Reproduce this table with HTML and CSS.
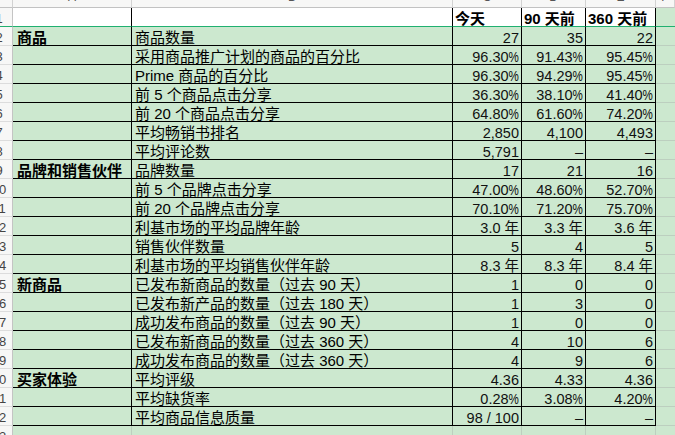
FILE: index.html
```html
<!DOCTYPE html>
<html lang="zh-CN">
<head>
<meta charset="utf-8">
<title>Sheet</title>
<link rel="stylesheet" href="styles.css">
</head>
<body>
<div class="sheet">
  <div class="row">
    <div class="hd corner"></div>
    <div class="hd"><span class="letter">A</span></div>
    <div class="hd"><span class="letter">B</span></div>
    <div class="hd"><span class="letter">C</span></div>
    <div class="hd"><span class="letter">D</span></div>
    <div class="hd"><span class="letter">E</span></div>
    <div class="hd"><span class="letter">F</span></div>
  </div>
  <div class="row top">
    <div class="rn"><span>1</span></div>
    <div class="c"></div>
    <div class="c"></div>
    <div class="c">今天</div>
    <div class="c">90 天前</div>
    <div class="c">360 天前</div>
    <div class="f"></div>
  </div>
  <div class="row">
    <div class="rn"><span>2</span></div>
    <div class="c grp">商品</div>
    <div class="c">商品数量</div>
    <div class="c n">27</div><div class="c n">35</div><div class="c n">22</div>
    <div class="f"></div>
  </div>
  <div class="row">
    <div class="rn"><span>3</span></div>
    <div class="c grp"></div>
    <div class="c">采用商品推广计划的商品的百分比</div>
    <div class="c n">96.30<span class="p">%</span></div><div class="c n">91.43<span class="p">%</span></div><div class="c n">95.45<span class="p">%</span></div>
    <div class="f"></div>
  </div>
  <div class="row">
    <div class="rn"><span>4</span></div>
    <div class="c grp"></div>
    <div class="c">Prime 商品的百分比</div>
    <div class="c n">96.30<span class="p">%</span></div><div class="c n">94.29<span class="p">%</span></div><div class="c n">95.45<span class="p">%</span></div>
    <div class="f"></div>
  </div>
  <div class="row">
    <div class="rn"><span>5</span></div>
    <div class="c grp"></div>
    <div class="c">前 5 个商品点击分享</div>
    <div class="c n">36.30<span class="p">%</span></div><div class="c n">38.10<span class="p">%</span></div><div class="c n">41.40<span class="p">%</span></div>
    <div class="f"></div>
  </div>
  <div class="row">
    <div class="rn"><span>6</span></div>
    <div class="c grp"></div>
    <div class="c">前 20 个商品点击分享</div>
    <div class="c n">64.80<span class="p">%</span></div><div class="c n">61.60<span class="p">%</span></div><div class="c n">74.20<span class="p">%</span></div>
    <div class="f"></div>
  </div>
  <div class="row">
    <div class="rn"><span>7</span></div>
    <div class="c grp"></div>
    <div class="c">平均畅销书排名</div>
    <div class="c n">2,850</div><div class="c n">4,100</div><div class="c n">4,493</div>
    <div class="f"></div>
  </div>
  <div class="row">
    <div class="rn"><span>8</span></div>
    <div class="c grp"></div>
    <div class="c">平均评论数</div>
    <div class="c n">5,791</div><div class="c n">–</div><div class="c n">–</div>
    <div class="f"></div>
  </div>
  <div class="row">
    <div class="rn"><span>9</span></div>
    <div class="c grp">品牌和销售伙伴</div>
    <div class="c">品牌数量</div>
    <div class="c n">17</div><div class="c n">21</div><div class="c n">16</div>
    <div class="f"></div>
  </div>
  <div class="row">
    <div class="rn"><span>10</span></div>
    <div class="c grp"></div>
    <div class="c">前 5 个品牌点击分享</div>
    <div class="c n">47.00<span class="p">%</span></div><div class="c n">48.60<span class="p">%</span></div><div class="c n">52.70<span class="p">%</span></div>
    <div class="f"></div>
  </div>
  <div class="row">
    <div class="rn"><span>11</span></div>
    <div class="c grp"></div>
    <div class="c">前 20 个品牌点击分享</div>
    <div class="c n">70.10<span class="p">%</span></div><div class="c n">71.20<span class="p">%</span></div><div class="c n">75.70<span class="p">%</span></div>
    <div class="f"></div>
  </div>
  <div class="row">
    <div class="rn"><span>12</span></div>
    <div class="c grp"></div>
    <div class="c">利基市场的平均品牌年龄</div>
    <div class="c n">3.0 年</div><div class="c n">3.3 年</div><div class="c n">3.6 年</div>
    <div class="f"></div>
  </div>
  <div class="row">
    <div class="rn"><span>13</span></div>
    <div class="c grp"></div>
    <div class="c">销售伙伴数量</div>
    <div class="c n">5</div><div class="c n">4</div><div class="c n">5</div>
    <div class="f"></div>
  </div>
  <div class="row">
    <div class="rn"><span>14</span></div>
    <div class="c grp"></div>
    <div class="c">利基市场的平均销售伙伴年龄</div>
    <div class="c n">8.3 年</div><div class="c n">8.3 年</div><div class="c n">8.4 年</div>
    <div class="f"></div>
  </div>
  <div class="row">
    <div class="rn"><span>15</span></div>
    <div class="c grp">新商品</div>
    <div class="c">已发布新商品的数量（过去 90 天）</div>
    <div class="c n">1</div><div class="c n">0</div><div class="c n">0</div>
    <div class="f"></div>
  </div>
  <div class="row">
    <div class="rn"><span>16</span></div>
    <div class="c grp"></div>
    <div class="c">已发布新产品的数量（过去 180 天）</div>
    <div class="c n">1</div><div class="c n">3</div><div class="c n">0</div>
    <div class="f"></div>
  </div>
  <div class="row">
    <div class="rn"><span>17</span></div>
    <div class="c grp"></div>
    <div class="c">成功发布商品的数量（过去 90 天）</div>
    <div class="c n">1</div><div class="c n">0</div><div class="c n">0</div>
    <div class="f"></div>
  </div>
  <div class="row">
    <div class="rn"><span>18</span></div>
    <div class="c grp"></div>
    <div class="c">已发布新商品的数量（过去 360 天）</div>
    <div class="c n">4</div><div class="c n">10</div><div class="c n">6</div>
    <div class="f"></div>
  </div>
  <div class="row">
    <div class="rn"><span>19</span></div>
    <div class="c grp"></div>
    <div class="c">成功发布商品的数量（过去 360 天）</div>
    <div class="c n">4</div><div class="c n">9</div><div class="c n">6</div>
    <div class="f"></div>
  </div>
  <div class="row">
    <div class="rn"><span>20</span></div>
    <div class="c grp">买家体验</div>
    <div class="c">平均评级</div>
    <div class="c n">4.36</div><div class="c n">4.33</div><div class="c n">4.36</div>
    <div class="f"></div>
  </div>
  <div class="row">
    <div class="rn"><span>21</span></div>
    <div class="c grp"></div>
    <div class="c">平均缺货率</div>
    <div class="c n">0.28<span class="p">%</span></div><div class="c n">3.08<span class="p">%</span></div><div class="c n">4.20<span class="p">%</span></div>
    <div class="f"></div>
  </div>
  <div class="row">
    <div class="rn"><span>22</span></div>
    <div class="c grp"></div>
    <div class="c">平均商品信息质量</div>
    <div class="c n">98 / 100</div><div class="c n">–</div><div class="c n">–</div>
    <div class="f"></div>
  </div>
  <div class="row">
    <div class="rn"><span>23</span></div>
    <div class="g"></div>
    <div class="g"></div>
    <div class="g"></div>
    <div class="g"></div>
    <div class="g"></div>
    <div class="f"></div>
  </div>
</div>
</body>
</html>
```

FILE: styles.css
```css
html, body {
  margin: 0;
  padding: 0;
}

body {
  width: 675px;
  height: 435px;
  overflow: hidden;
  background: #cce8cf;
  font-family: "Liberation Sans", "Noto Sans CJK SC", sans-serif;
  color: #000;
}

.sheet {
  display: grid;
  grid-template-columns: 13px 119px 321px 69px 64px 70px 19px;
  grid-template-rows: 8px 19px repeat(21, 19px) 19px;
}

.row {
  display: contents;
}

.hd {
  box-sizing: border-box;
  background: #f7f7f6;
  border-right: 1px solid #d2d2d2;
  border-bottom: 1px solid #c2c2c2;
  overflow: hidden;
}

.letter {
  display: block;
  margin-top: -9px;
  font-size: 12px;
  line-height: 12px;
  text-align: center;
  color: #555;
}

.rn {
  box-sizing: border-box;
  background: #f7f7f6;
  border-right: 1px solid #c4c4c4;
  border-bottom: 1px solid #dcdcdc;
  overflow: hidden;
}

.rn span {
  display: block;
  width: 28px;
  margin-left: -15px;
  padding-top: 3px;
  font-size: 13px;
  line-height: 15px;
  text-align: center;
  color: #444;
}

.c {
  box-sizing: border-box;
  border-right: 1px solid #000;
  border-bottom: 1px solid #000;
  padding: 2px 3px 0 3px;
  font-size: 15px;
  line-height: 17px;
  white-space: nowrap;
  overflow: hidden;
}

.grp {
  font-weight: bold;
  padding-left: 4px;
}

.n {
  text-align: right;
  font-size: 14.5px;
  padding-top: 3px;
  padding-right: 2px;
  color: #111;
}

.p {
  display: inline-block;
  transform: scaleX(0.8);
  transform-origin: right center;
  margin-left: -2.5px;
}

.f {
  box-sizing: border-box;
  border-bottom: 1px solid #bccfbf;
}

.g {
  box-sizing: border-box;
  border-right: 1px solid #bccfbf;
  border-bottom: 1px solid #bccfbf;
}

.top .c {
  background: #fff;
  font-weight: bold;
  padding-left: 2px;
  border-bottom: 1px solid #20b070;
}

.top .rn,
.top .f {
  border-bottom: 1px solid #20b070;
}
```
